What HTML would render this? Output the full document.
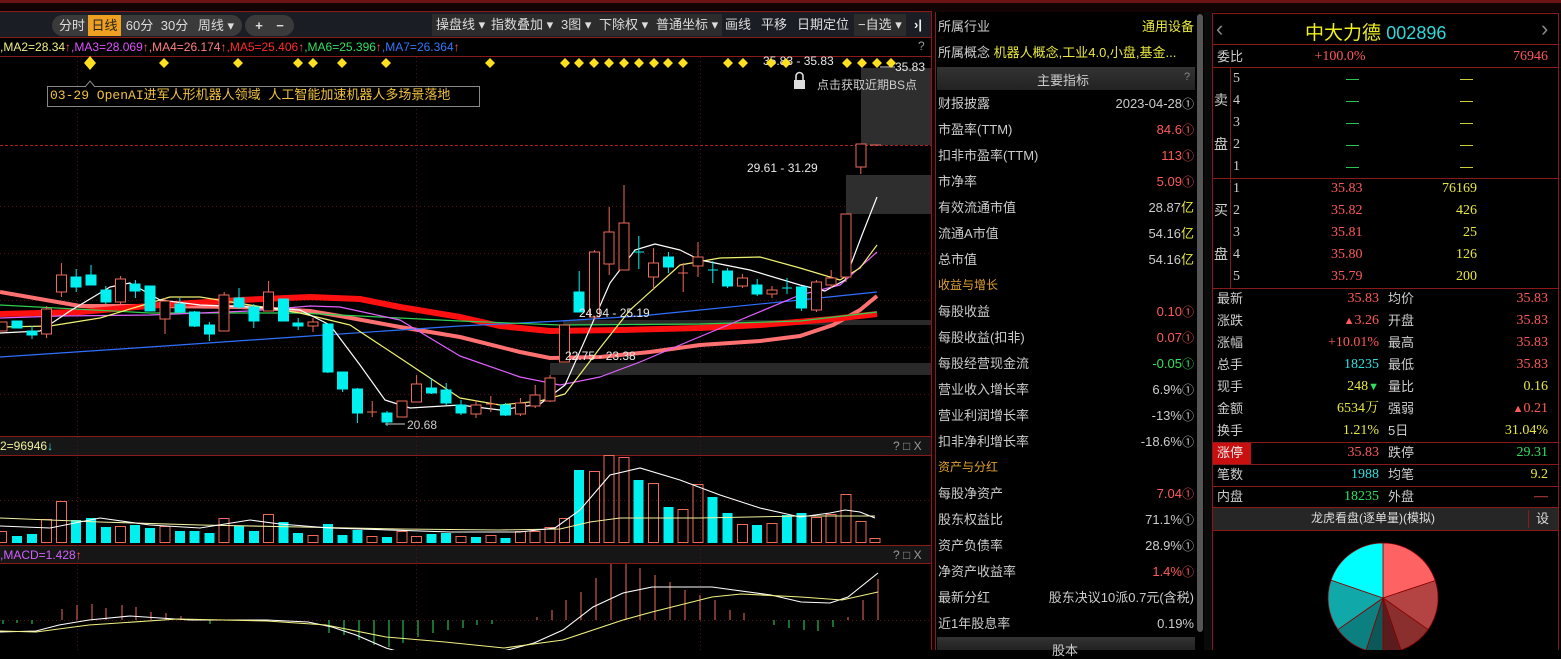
<!DOCTYPE html>
<html><head><meta charset="utf-8"><style>
*{margin:0;padding:0;box-sizing:border-box}
body{width:1561px;height:650px;background:#000;overflow:hidden;position:relative;font-family:"Liberation Sans","Noto Sans CJK SC",sans-serif;font-size:13px;color:#ccc}
.a{position:absolute;white-space:nowrap}
.btn{position:absolute;top:15px;height:21px;line-height:21px;color:#ddd;font-size:13px;text-align:center}
.grp{position:absolute;top:15px;height:21px;background:#3a3a3a;border-radius:11px}
.tb{position:absolute;top:14px;height:22px;line-height:22px;background:#2c2c2c;color:#ddd;font-size:13px;padding:0 4px}
.ml{position:absolute;left:938px;font-size:13px;color:#ccc;height:20px;line-height:20px}
.mv{position:absolute;right:367px;font-size:13px;height:20px;line-height:20px;text-align:right}
.c{font-size:12px}
.r{color:#ff5a5a}.g{color:#30e060}.y{color:#e8e840}.cy{color:#30e0e0}.w{color:#ccc}
.sl{position:absolute;left:1217px;font-size:13px;color:#ccc;height:22px;line-height:22px}
.sv{position:absolute;font-family:"Liberation Serif","Noto Serif CJK SC",serif;font-size:14px;height:22px;line-height:22px;text-align:right}
</style></head><body>
<!-- top strip -->
<div class="a" style="left:0;top:0;width:1561px;height:3px;background:#6a1414"></div>
<div class="a" style="left:0;top:3px;width:1561px;height:9px;background:#120404"></div>
<div class="a" style="left:0;top:11px;width:932px;height:1px;background:#8a1a1a"></div>
<div class="a" style="left:0;top:12px;width:932px;height:25px;background:#1b1d24"></div>
<div class="grp" style="left:52px;width:190px"></div>
<div class="a" style="left:88px;top:15px;width:33px;height:21px;background:#f0a020"></div>
<div class="btn" style="left:56px;width:32px">分时</div>
<div class="btn" style="left:88px;width:33px;color:#222">日线</div>
<div class="btn" style="left:123px;width:33px">60分</div>
<div class="btn" style="left:158px;width:33px">30分</div>
<div class="btn" style="left:193px;width:46px">周线 ▾</div>
<div class="grp" style="left:245px;width:49px"></div>
<div class="btn" style="left:249px;width:20px;font-weight:bold">+</div>
<div class="btn" style="left:270px;width:20px;font-weight:bold">−</div>
<div class="tb" style="left:432px">操盘线 ▾</div>
<div class="tb" style="left:487px">指数叠加 ▾</div>
<div class="tb" style="left:557px">3图 ▾</div>
<div class="tb" style="left:595px">下除权 ▾</div>
<div class="tb" style="left:652px">普通坐标 ▾</div>
<div class="a" style="left:725px;top:14px;line-height:22px;color:#ddd">画线</div>
<div class="a" style="left:761px;top:14px;line-height:22px;color:#ddd">平移</div>
<div class="a" style="left:797px;top:14px;line-height:22px;color:#ddd">日期定位</div>
<div class="tb" style="left:854px">−自选 ▾</div>
<div class="a" style="left:914px;top:14px;line-height:22px;color:#eee;font-weight:bold">›|</div>
<!-- MA header -->
<div class="a" style="left:0;top:37px;width:932px;height:1px;background:#8a1a1a"></div>
<div class="a" style="left:0;top:39px;font-size:12px;line-height:16px;font-family:'Liberation Sans',sans-serif"><span style="color:#f0f080">,MA2=28.34</span><span class="r">↑</span><span style="color:#e050ff">,MA3=28.069</span><span class="r">↑</span><span style="color:#ff8080">,MA4=26.174</span><span class="r">↑</span><span style="color:#ff2a2a">,MA5=25.406</span><span class="r">↑</span><span style="color:#30e060">,MA6=25.396</span><span class="r">↑</span><span style="color:#3078ff">,MA7=26.364</span><span class="r">↑</span></div>
<div class="a" style="left:918px;top:39px;font-size:12px;color:#999">?</div>

<svg class="a" style="left:0;top:0" width="932" height="650" xmlns="http://www.w3.org/2000/svg">
<g stroke="#8a1a1a" stroke-width="1">
<line x1="0" y1="56.5" x2="931" y2="56.5"/>
<line x1="0" y1="436.5" x2="931" y2="436.5"/>
<line x1="0" y1="455.5" x2="931" y2="455.5"/>
<line x1="0" y1="545.5" x2="931" y2="545.5"/>
<line x1="0" y1="563.5" x2="931" y2="563.5"/>
<line x1="931.5" y1="11" x2="931.5" y2="650"/>
</g>
<rect x="0" y="437" width="931" height="18" fill="#161616"/>
<rect x="0" y="546" width="931" height="17" fill="#161616"/>
<!-- grid -->
<g stroke="#5a1010" stroke-width="1" stroke-dasharray="1,3">
<line x1="0" y1="206.5" x2="931" y2="206.5"/><line x1="0" y1="253.5" x2="931" y2="253.5"/>
<line x1="0" y1="300.5" x2="931" y2="300.5"/><line x1="0" y1="347.5" x2="931" y2="347.5"/>
<line x1="0" y1="394.5" x2="931" y2="394.5"/>
<line x1="0" y1="500.5" x2="931" y2="500.5"/><line x1="0" y1="620.5" x2="931" y2="620.5"/>
<line x1="77.5" y1="57" x2="77.5" y2="650"/><line x1="416.5" y1="57" x2="416.5" y2="650"/><line x1="700.5" y1="57" x2="700.5" y2="650"/>
</g>
<line x1="0" y1="145.5" x2="931" y2="145.5" stroke="#b02020" stroke-dasharray="3,2"/>
<!-- gray zones -->
<rect x="861" y="68" width="70" height="77" fill="#2e2e2e"/>
<rect x="846" y="175" width="85" height="39" fill="#2e2e2e"/>
<rect x="563" y="320" width="368" height="5" fill="#2a2a2a"/>
<rect x="550" y="363" width="381" height="12" fill="#2a2a2a"/>
<!-- MA lines -->
<g fill="none" stroke-linejoin="round">
<polyline stroke="#ff7070" stroke-width="4" points="0,292 80,306 150,306 240,307 310,311 340,316 400,327 460,337 520,352 550,358 600,357 650,352 700,345 760,341 800,336 833,325 860,310 877,296"/>
<polyline stroke="#ff1010" stroke-width="6" points="0,314 80,312 160,305 240,300 310,297 360,299 400,307 460,317 500,326 550,331 620,330 700,328 760,325 833,319 877,314"/>
<polyline stroke="#3070ff" stroke-width="1.2" points="0,357 150,347 310,336 400,330 460,326 560,321 640,316 700,310 800,300 877,292"/>
<polyline stroke="#30d050" stroke-width="1.2" points="0,305 150,313 300,313 400,318 460,321 560,325 700,324 800,321 877,312"/>
<polyline stroke="#e060ff" stroke-width="1.2" points="0,318 60,316 150,315 250,311 310,306 340,307 400,320 460,356 520,377 560,385 600,377 640,362 680,345 740,320 800,295 840,285 877,252"/>
<polyline stroke="#f0f070" stroke-width="1.2" points="0,327 50,326 100,318 140,306 170,297 200,297 250,305 300,313 350,325 400,358 460,398 500,405 540,401 565,394 600,348 630,310 680,265 720,258 760,257 800,268 840,280 860,268 877,245"/>
<polyline stroke="#ffffff" stroke-width="1.2" points="0,333 40,331 70,311 110,287 130,283 160,300 200,305 250,307 300,310 330,325 360,365 385,400 410,408 460,405 500,410 540,404 565,385 585,340 610,283 635,250 655,244 680,250 700,260 750,270 800,285 825,291 845,280 862,235 877,197"/>
</g>
<!-- candles: red hollow -->
<g fill="#000" stroke="#f06a5a" stroke-width="1">
<rect x="-2" y="322" width="9" height="9"/>
<line x1="46.6" y1="306" x2="46.6" y2="338"/><rect x="41.5" y="309" width="10" height="25"/>
<line x1="61.4" y1="263" x2="61.4" y2="297"/><rect x="56.5" y="275" width="10" height="17"/>
<line x1="120.6" y1="276" x2="120.6" y2="304"/><rect x="115.5" y="279" width="10" height="23"/>
<line x1="165" y1="298" x2="165" y2="334"/><rect x="160" y="301" width="10" height="18"/>
<line x1="224.2" y1="292" x2="224.2" y2="331"/><rect x="219" y="295" width="10" height="36"/>
<line x1="268.6" y1="281" x2="268.6" y2="311"/><rect x="263.5" y="292" width="10" height="19"/>
<line x1="313" y1="318" x2="313" y2="332"/><rect x="308" y="322" width="10" height="4"/>
<line x1="372.2" y1="401" x2="372.2" y2="417"/><line x1="367" y1="412" x2="377" y2="412"/>
<rect x="397" y="401" width="10" height="16"/>
<line x1="416.6" y1="375" x2="416.6" y2="402"/><rect x="411.5" y="384" width="10" height="18"/>
<line x1="476" y1="400" x2="476" y2="418"/><rect x="471" y="405" width="10" height="9"/>
<line x1="490.8" y1="396" x2="490.8" y2="412"/><line x1="486" y1="404" x2="496" y2="404"/>
<line x1="520.4" y1="398" x2="520.4" y2="416"/><rect x="515.5" y="403" width="10" height="11"/>
<line x1="535.2" y1="385" x2="535.2" y2="408"/><rect x="530" y="395" width="10" height="11"/>
<line x1="550" y1="375" x2="550" y2="402"/><rect x="545" y="378" width="10" height="23"/>
<rect x="559.5" y="325" width="10" height="37"/>
<line x1="594.4" y1="250" x2="594.4" y2="320"/><rect x="589.5" y="252" width="10" height="65"/>
<line x1="609.2" y1="207" x2="609.2" y2="275"/><rect x="604" y="232" width="10" height="32"/>
<line x1="624" y1="185" x2="624" y2="270"/><rect x="619" y="223" width="10" height="47"/>
<line x1="653.6" y1="248" x2="653.6" y2="290"/><rect x="648.5" y="263" width="10" height="14"/>
<line x1="683.2" y1="263" x2="683.2" y2="292"/><line x1="678" y1="273" x2="688" y2="273"/>
<line x1="698" y1="242" x2="698" y2="277"/><rect x="693" y="257" width="10" height="9"/>
<line x1="742.4" y1="274" x2="742.4" y2="288"/><rect x="737.5" y="278" width="10" height="8"/>
<line x1="772" y1="286" x2="772" y2="298"/><rect x="767" y="290" width="10" height="4"/>
<line x1="816.4" y1="280" x2="816.4" y2="312"/><rect x="811.5" y="282" width="10" height="28"/>
<line x1="831.2" y1="270" x2="831.2" y2="288"/><rect x="826" y="278" width="10" height="7"/>
<line x1="846" y1="214" x2="846" y2="282"/><rect x="841" y="214" width="10" height="63"/>
<line x1="860.8" y1="167" x2="860.8" y2="174"/><rect x="856" y="144" width="10" height="23"/>
<line x1="870" y1="145" x2="881" y2="145"/>
</g>
<!-- candles: cyan -->
<g fill="#00f0f0" stroke="#00f0f0" stroke-width="1">
<rect x="12" y="321" width="10" height="7"/>
<line x1="32" y1="326" x2="32" y2="339"/><rect x="27" y="331" width="10" height="4"/>
<line x1="76.2" y1="269" x2="76.2" y2="292"/><rect x="71" y="277" width="10" height="10"/>
<line x1="91" y1="265" x2="91" y2="285"/><rect x="86" y="275" width="10" height="10"/>
<line x1="105.8" y1="286" x2="105.8" y2="304"/><rect x="101" y="290" width="10" height="12"/>
<line x1="135.4" y1="280" x2="135.4" y2="298"/><rect x="130" y="284" width="10" height="7"/>
<rect x="145" y="286" width="10" height="25"/>
<line x1="179.8" y1="298" x2="179.8" y2="313"/><rect x="175" y="304" width="10" height="8"/>
<line x1="194.6" y1="311" x2="194.6" y2="327"/><rect x="189.5" y="312" width="10" height="14"/>
<line x1="209.4" y1="322" x2="209.4" y2="341"/><rect x="204.5" y="325" width="10" height="9"/>
<line x1="239" y1="288" x2="239" y2="309"/><rect x="234" y="298" width="10" height="9"/>
<line x1="253.8" y1="304" x2="253.8" y2="328"/><rect x="249" y="307" width="10" height="14"/>
<rect x="278.5" y="299" width="10" height="22"/>
<line x1="298.2" y1="318" x2="298.2" y2="330"/><rect x="293" y="323" width="10" height="3"/>
<line x1="327.8" y1="324" x2="327.8" y2="373"/><rect x="323" y="324" width="10" height="48"/>
<line x1="342.6" y1="372" x2="342.6" y2="392"/><rect x="337.5" y="372" width="10" height="17"/>
<line x1="357.4" y1="388" x2="357.4" y2="423"/><rect x="352.5" y="389" width="10" height="24"/>
<line x1="387" y1="411" x2="387" y2="426"/><rect x="382" y="413" width="10" height="9"/>
<line x1="431.4" y1="378" x2="431.4" y2="394"/><rect x="426.5" y="388" width="10" height="5"/>
<line x1="446.2" y1="383" x2="446.2" y2="405"/><rect x="441" y="390" width="10" height="13"/>
<line x1="461" y1="400" x2="461" y2="415"/><rect x="456" y="405" width="10" height="8"/>
<line x1="505.6" y1="403" x2="505.6" y2="416"/><rect x="500.5" y="405" width="10" height="10"/>
<line x1="579.2" y1="271" x2="579.2" y2="312"/><rect x="574" y="292" width="10" height="20"/>
<line x1="638.8" y1="236" x2="638.8" y2="269"/><line x1="633.5" y1="252" x2="644" y2="252"/>
<line x1="668.4" y1="252" x2="668.4" y2="273"/><rect x="663.5" y="257" width="10" height="10"/>
<line x1="712.8" y1="261" x2="712.8" y2="283"/><line x1="708" y1="270" x2="718" y2="270"/>
<line x1="727.6" y1="268" x2="727.6" y2="288"/><rect x="722.5" y="271" width="10" height="15"/>
<line x1="757.2" y1="279" x2="757.2" y2="296"/><rect x="752" y="285" width="10" height="9"/>
<line x1="787" y1="278" x2="787" y2="294"/><line x1="782" y1="288" x2="792" y2="288"/>
<line x1="801.6" y1="286" x2="801.6" y2="311"/><rect x="796.5" y="287" width="10" height="21"/>
</g>
<!-- labels in chart -->
<g font-family="Liberation Sans,sans-serif" font-size="12" fill="#e8e8e8">
<text x="747" y="172">29.61 - 31.29</text>
<text x="579" y="317">24.94 - 25.19</text>
<text x="565" y="360">22.75 - 23.38</text>
<text x="407" y="429" fill="#ccc">20.68</text>
<text x="763" y="65">35.83 - 35.83</text>
<text x="895" y="71">35.83</text>
</g>
<line x1="385" y1="424" x2="405" y2="424" stroke="#ccc"/>
<line x1="880" y1="67" x2="895" y2="67" stroke="#ccc"/>
<!-- diamonds -->
<g fill="#ffe020">
<path d="M90 56 L96 63 L90 70 L84 63Z"/>
<path d="M164 58 L169 63 L164 68 L159 63Z"/><path d="M238 58 L243 63 L238 68 L233 63Z"/>
<path d="M298 58 L303 63 L298 68 L293 63Z"/><path d="M313 58 L318 63 L313 68 L308 63Z"/>
<path d="M342 58 L347 63 L342 68 L337 63Z"/><path d="M386 58 L391 63 L386 68 L381 63Z"/>
<path d="M490 58 L495 63 L490 68 L485 63Z"/><path d="M565 58 L570 63 L565 68 L560 63Z"/>
<path d="M579 58 L584 63 L579 68 L574 63Z"/><path d="M594 58 L599 63 L594 68 L589 63Z"/>
<path d="M609 58 L614 63 L609 68 L604 63Z"/><path d="M624 58 L629 63 L624 68 L619 63Z"/>
<path d="M639 58 L644 63 L639 68 L634 63Z"/><path d="M654 58 L659 63 L654 68 L649 63Z"/>
<path d="M668 58 L673 63 L668 68 L663 63Z"/><path d="M683 58 L688 63 L683 68 L678 63Z"/>
<path d="M728 58 L733 63 L728 68 L723 63Z"/><path d="M743 58 L748 63 L743 68 L738 63Z"/>
<path d="M771 58 L776 63 L771 68 L766 63Z"/><path d="M786 58 L791 63 L786 68 L781 63Z"/>
<path d="M847 58 L852 63 L847 68 L842 63Z"/><path d="M862 58 L867 63 L862 68 L857 63Z"/>
<path d="M877 58 L882 63 L877 68 L872 63Z"/><path d="M891 58 L896 63 L891 68 L886 63Z"/>
</g>
<!-- lock -->
<rect x="794" y="80" width="11" height="9" fill="#ddd"/>
<path d="M796 80 V76 a3.5 3.5 0 0 1 7 0 V80" fill="none" stroke="#ddd" stroke-width="1.6"/>
<!-- tooltip -->
<rect x="47.5" y="86.5" width="432" height="20" fill="#000" stroke="#888"/>
<path d="M85 87 L90 81 L95 87" fill="#000" stroke="#888"/>
<!-- volume bars -->
<g fill="#00f0f0">
<rect x="12" y="536" width="10" height="7"/><rect x="27" y="534" width="10" height="9"/>
<rect x="71" y="520" width="10" height="23"/><rect x="86" y="518" width="10" height="25"/>
<rect x="101" y="527" width="10" height="16"/><rect x="130" y="525" width="10" height="18"/>
<rect x="145" y="528" width="10" height="15"/><rect x="175" y="531" width="10" height="12"/>
<rect x="189.5" y="531" width="10" height="12"/><rect x="204.5" y="533" width="10" height="10"/>
<rect x="234" y="526" width="10" height="17"/><rect x="249" y="531" width="10" height="12"/>
<rect x="278.5" y="522" width="10" height="21"/><rect x="293" y="533" width="10" height="10"/>
<rect x="323" y="524" width="10" height="19"/><rect x="337.5" y="535" width="10" height="8"/>
<rect x="352.5" y="530" width="10" height="13"/><rect x="382" y="537" width="10" height="6"/>
<rect x="426.5" y="534" width="10" height="9"/><rect x="441" y="533" width="10" height="10"/>
<rect x="471" y="537" width="10" height="6"/><rect x="500.5" y="538" width="10" height="5"/>
<rect x="574" y="470" width="10" height="73"/><rect x="633.5" y="480" width="10" height="63"/>
<rect x="663.5" y="507" width="10" height="36"/><rect x="707.5" y="497" width="10" height="46"/>
<rect x="722.5" y="513" width="10" height="30"/><rect x="752" y="525" width="10" height="18"/>
<rect x="782" y="515" width="10" height="28"/><rect x="796.5" y="513" width="10" height="30"/>
</g>
<g fill="none" stroke="#f06a5a">
<rect x="-2.5" y="531.5" width="9" height="11"/>
<rect x="41.5" y="519.5" width="10" height="23"/><rect x="56.5" y="501.5" width="10" height="41"/>
<rect x="115.5" y="526.5" width="10" height="16"/><rect x="160" y="526.5" width="10" height="16"/>
<rect x="219" y="518.5" width="10" height="24"/><rect x="263.5" y="514.5" width="10" height="28"/>
<rect x="308" y="535.5" width="10" height="7"/><rect x="367" y="536.5" width="10" height="6"/>
<rect x="397" y="531.5" width="10" height="11"/><rect x="411.5" y="536.5" width="10" height="6"/>
<rect x="456" y="536.5" width="10" height="6"/><rect x="486" y="535.5" width="10" height="7"/>
<rect x="515.5" y="531.5" width="10" height="11"/><rect x="530" y="531.5" width="10" height="11"/>
<rect x="545" y="527.5" width="10" height="15"/><rect x="559.5" y="518.5" width="10" height="24"/>
<rect x="589.5" y="471.5" width="10" height="71"/><rect x="604" y="455.5" width="10" height="87"/>
<rect x="619" y="457.5" width="10" height="85"/><rect x="648.5" y="483.5" width="10" height="59"/>
<rect x="678" y="509.5" width="10" height="33"/><rect x="693" y="484.5" width="10" height="58"/>
<rect x="737.5" y="524.5" width="10" height="18"/><rect x="767" y="523.5" width="10" height="19"/>
<rect x="811.5" y="517.5" width="10" height="25"/><rect x="826" y="514.5" width="10" height="28"/>
<rect x="841" y="494.5" width="10" height="48"/><rect x="856" y="521.5" width="10" height="21"/>
<rect x="870" y="538.5" width="10" height="4"/>
</g>
<g fill="none" stroke-width="1.1">
<polyline stroke="#f0f0a0" points="0,518 100,522 200,525 300,527 400,529 500,530 560,529 590,522 620,518 700,518 800,516 875,516"/>
<polyline stroke="#fff" points="0,526 50,528 100,518 150,525 200,528 250,520 280,524 330,528 450,532 520,532 555,528 580,510 610,475 640,468 680,480 720,495 760,508 800,517 830,513 845,510 860,512 875,518"/>
</g>
<!-- MACD -->
<g stroke="#f06a5a" stroke-width="1">
<line x1="62" y1="609" x2="62" y2="620"/><line x1="77" y1="605" x2="77" y2="620"/><line x1="92" y1="604" x2="92" y2="620"/>
<line x1="106" y1="608" x2="106" y2="620"/><line x1="122" y1="605" x2="122" y2="620"/><line x1="136" y1="607" x2="136" y2="620"/>
<line x1="151" y1="612" x2="151" y2="620"/><line x1="166" y1="613" x2="166" y2="620"/><line x1="181" y1="616" x2="181" y2="620"/>
<line x1="537" y1="617" x2="537" y2="620"/><line x1="552" y1="610" x2="552" y2="620"/><line x1="566" y1="600" x2="566" y2="620"/>
<line x1="581" y1="592" x2="581" y2="620"/><line x1="596" y1="578" x2="596" y2="620"/><line x1="611" y1="564" x2="611" y2="620"/>
<line x1="626" y1="564" x2="626" y2="620"/><line x1="640" y1="568" x2="640" y2="620"/><line x1="655" y1="575" x2="655" y2="620"/>
<line x1="670" y1="582" x2="670" y2="620"/><line x1="685" y1="590" x2="685" y2="620"/><line x1="700" y1="595" x2="700" y2="620"/>
<line x1="715" y1="600" x2="715" y2="620"/><line x1="730" y1="610" x2="730" y2="620"/><line x1="744" y1="613" x2="744" y2="620"/>
<line x1="848" y1="617" x2="848" y2="620"/><line x1="863" y1="600" x2="863" y2="620"/><line x1="878" y1="579" x2="878" y2="620"/>
</g>
<g stroke="#30e060" stroke-width="1">
<line x1="3" y1="620" x2="3" y2="624"/><line x1="17" y1="620" x2="17" y2="623"/><line x1="32" y1="620" x2="32" y2="624"/>
<line x1="210" y1="620" x2="210" y2="624"/><line x1="329" y1="620" x2="329" y2="633"/><line x1="344" y1="620" x2="344" y2="635"/>
<line x1="359" y1="620" x2="359" y2="640"/><line x1="374" y1="620" x2="374" y2="645"/><line x1="389" y1="620" x2="389" y2="647"/>
<line x1="403" y1="620" x2="403" y2="643"/><line x1="418" y1="620" x2="418" y2="637"/><line x1="433" y1="620" x2="433" y2="633"/>
<line x1="448" y1="620" x2="448" y2="630"/><line x1="463" y1="620" x2="463" y2="628"/><line x1="477" y1="620" x2="477" y2="625"/>
<line x1="492" y1="620" x2="492" y2="624"/><line x1="774" y1="620" x2="774" y2="625"/><line x1="789" y1="620" x2="789" y2="628"/>
<line x1="804" y1="620" x2="804" y2="630"/><line x1="818" y1="620" x2="818" y2="631"/><line x1="833" y1="620" x2="833" y2="627"/>
</g>
<g fill="none" stroke-width="1.1">
<polyline stroke="#fff" points="0,632 36,631 59,625 89,620 130,616 160,618 190,620 267,620 308,622 332,627 356,635 386,648 400,652 500,652 534,643 563,630 593,607 623,593 652,587 712,587 771,595 801,602 830,603 848,597 878,573"/>
<polyline stroke="#f0f080" points="0,631 36,632 89,625 178,619 267,621 326,625 386,637 445,642 504,648 563,640 623,620 652,612 712,597 741,594 801,597 842,600 878,592"/>
</g>
<g font-family="Liberation Sans,sans-serif" font-size="12" fill="#999"><text x="893" y="450">? □ X</text><text x="893" y="559">? □ X</text></g>
</svg>
<div class="a" style="left:50px;top:88px;font-family:'Liberation Mono','Noto Sans CJK SC',monospace;font-size:13px;color:#f0c040;line-height:16px">03-29 OpenAI进军人形机器人领域 人工智能加速机器人多场景落地</div>
<div class="a" style="left:817px;top:76px;font-size:12px;color:#ccc">点击获取近期BS点</div>
<div class="a" style="left:0;top:438px;font-size:12px;color:#f0f0a0;line-height:16px">2=96946<span class="cy">↓</span></div>
<div class="a" style="left:0;top:547px;font-size:12px;line-height:16px"><span style="color:#d060ff">,MACD=1.428</span><span class="r">↑</span></div>

<!-- middle panel -->
<div class="a" style="left:932px;top:12px;width:2px;height:638px;background:#120404"></div>
<div class="a" style="left:935px;top:12px;width:1px;height:638px;background:#8a1a1a"></div>
<div class="a" style="left:1197px;top:14px;width:6px;height:618px;background:#555;border-radius:3px"></div>
<div class="ml" style="top:17px">所属行业</div><div class="mv y" style="top:17px">通用设备</div>
<div class="ml" style="top:43px">所属概念 <span class="y">机器人概念,工业4.0,小盘,基金...</span></div>
<div class="a" style="left:937px;top:67px;width:258px;height:23px;background:linear-gradient(#333,#222)"></div>
<div class="a" style="left:1037px;top:70px;color:#ccc">主要指标</div><div class="a" style="left:1184px;top:71px;font-size:11px;color:#888">?</div>
<div class="ml" style="top:94px">财报披露</div><div class="mv w" style="top:94px">2023-04-28<span class="c">①</span></div>
<div class="ml" style="top:120px">市盈率(TTM)</div><div class="mv r" style="top:120px">84.6<span class="c">①</span></div>
<div class="ml" style="top:146px">扣非市盈率(TTM)</div><div class="mv r" style="top:146px">113<span class="c">①</span></div>
<div class="ml" style="top:172px">市净率</div><div class="mv r" style="top:172px">5.09<span class="c">①</span></div>
<div class="ml" style="top:198px">有效流通市值</div><div class="mv w" style="top:198px">28.87<span class="y">亿</span></div>
<div class="ml" style="top:224px">流通A市值</div><div class="mv w" style="top:224px">54.16<span class="y">亿</span></div>
<div class="ml" style="top:250px">总市值</div><div class="mv w" style="top:250px">54.16<span class="y">亿</span></div>
<div class="ml" style="top:275px;font-size:12px;color:#e0a030">收益与增长</div>
<div class="ml" style="top:302px">每股收益</div><div class="mv r" style="top:302px">0.10<span class="c">①</span></div>
<div class="ml" style="top:328px">每股收益(扣非)</div><div class="mv r" style="top:328px">0.07<span class="c">①</span></div>
<div class="ml" style="top:354px">每股经营现金流</div><div class="mv g" style="top:354px">-0.05<span class="c">①</span></div>
<div class="ml" style="top:380px">营业收入增长率</div><div class="mv w" style="top:380px">6.9%<span class="c">①</span></div>
<div class="ml" style="top:406px">营业利润增长率</div><div class="mv w" style="top:406px">-13%<span class="c">①</span></div>
<div class="ml" style="top:432px">扣非净利增长率</div><div class="mv w" style="top:432px">-18.6%<span class="c">①</span></div>
<div class="ml" style="top:457px;font-size:12px;color:#e0a030">资产与分红</div>
<div class="ml" style="top:484px">每股净资产</div><div class="mv r" style="top:484px">7.04<span class="c">①</span></div>
<div class="ml" style="top:510px">股东权益比</div><div class="mv w" style="top:510px">71.1%<span class="c">①</span></div>
<div class="ml" style="top:536px">资产负债率</div><div class="mv w" style="top:536px">28.9%<span class="c">①</span></div>
<div class="ml" style="top:562px">净资产收益率</div><div class="mv r" style="top:562px">1.4%<span class="c">①</span></div>
<div class="ml" style="top:588px">最新分红</div><div class="mv w" style="top:588px">股东决议10派0.7元(含税)</div>
<div class="ml" style="top:614px">近1年股息率</div><div class="mv w" style="top:614px">0.19%</div>
<div class="a" style="left:937px;top:637px;width:258px;height:13px;background:linear-gradient(#333,#222)"></div>
<div class="a" style="left:1052px;top:640px;color:#ccc">股本</div>

<!-- right panel -->
<div class="a" style="left:1204px;top:12px;width:8px;height:638px;background:#0a0a0a"></div>
<svg class="a" style="left:1204px;top:0" width="357" height="650" xmlns="http://www.w3.org/2000/svg">
<g stroke="#8a1a1a" fill="none">
<rect x="8.5" y="13.5" width="346" height="640"/>
<line x1="8" y1="44.5" x2="355" y2="44.5"/><line x1="8" y1="67.5" x2="355" y2="67.5"/>
<line x1="8" y1="178.5" x2="355" y2="178.5"/><line x1="8" y1="288.5" x2="355" y2="288.5"/>
<line x1="26.5" y1="68" x2="26.5" y2="288"/>
<line x1="8" y1="442.5" x2="355" y2="442.5"/><line x1="8" y1="464.5" x2="355" y2="464.5"/>
<line x1="8" y1="486.5" x2="355" y2="486.5"/><line x1="8" y1="507.5" x2="355" y2="507.5"/>
<line x1="8" y1="530.5" x2="355" y2="530.5"/>
</g>
<rect x="9" y="508" width="345" height="22" fill="#262626"/>
<line x1="324.5" y1="510" x2="324.5" y2="528" stroke="#8a1a1a"/>
<rect x="9" y="443" width="38" height="21" fill="#c81010"/>
<g stroke="#800" stroke-width="0.8">
<path d="M179 598 L179 543 A55 55 0 0 1 231.2 580.6Z" fill="#ff6262"/>
<path d="M179 598 L231.2 580.6 A55 55 0 0 1 224.1 629.6Z" fill="#b44444"/>
<path d="M179 598 L224.1 629.6 A55 55 0 0 1 196.9 650Z" fill="#8a2e2e"/>
<path d="M179 598 L196.9 650 A55 55 0 0 1 179 653Z" fill="#5a1c1c"/>
<path d="M179 598 L179 653 A55 55 0 0 1 162 650.3Z" fill="#0c5858"/>
<path d="M179 598 L162 650.3 A55 55 0 0 1 133.9 629.6Z" fill="#0c8080"/>
<path d="M179 598 L133.9 629.6 A55 55 0 0 1 127 580.1Z" fill="#10a8a8"/>
<path d="M179 598 L127 580.1 A55 55 0 0 1 179 543Z" fill="#00ffff"/>
</g>
</svg>
<div class="a" style="left:1216px;top:16px;font-size:22px;color:#888">‹</div>
<div class="a" style="left:1541px;top:16px;font-size:22px;color:#888">›</div>
<div class="a" style="left:1305px;top:18px;font-size:19px;color:#f0f020">中大力德 <span style="color:#30d8d8;font-family:'Liberation Sans',sans-serif;font-size:18px">002896</span></div>
<div class="sl" style="top:46px">委比</div>
<div class="sv r" style="top:46px;left:1300px;width:80px;text-align:center">+100.0%</div>
<div class="sv r" style="top:46px;right:13px">76946</div>
<div class="a" style="left:1214px;top:90px;font-size:14px">卖</div>
<div class="a" style="left:1214px;top:134px;font-size:14px">盘</div>
<div class="a" style="left:1214px;top:200px;font-size:14px">买</div>
<div class="a" style="left:1214px;top:244px;font-size:14px">盘</div>
<div class="sv w" style="top:68px;left:1233px">5</div><div class="sv w" style="top:90px;left:1233px">4</div><div class="sv w" style="top:112px;left:1233px">3</div><div class="sv w" style="top:134px;left:1233px">2</div><div class="sv w" style="top:156px;left:1233px">1</div>
<div class="a g" style="left:1346px;top:68px;line-height:22px">—<br>—<br>—<br>—<br>—</div>
<div class="a y" style="left:1460px;top:68px;line-height:22px">—<br>—<br>—<br>—<br>—</div>
<div class="sv w" style="top:178px;left:1233px">1</div><div class="sv w" style="top:200px;left:1233px">2</div><div class="sv w" style="top:222px;left:1233px">3</div><div class="sv w" style="top:244px;left:1233px">4</div><div class="sv w" style="top:266px;left:1233px">5</div>
<div class="sv r" style="top:178px;left:1331px">35.83</div><div class="sv r" style="top:200px;left:1331px">35.82</div><div class="sv r" style="top:222px;left:1331px">35.81</div><div class="sv r" style="top:244px;left:1331px">35.80</div><div class="sv r" style="top:266px;left:1331px">35.79</div>
<div class="sv y" style="top:178px;right:84px">76169</div><div class="sv y" style="top:200px;right:84px">426</div><div class="sv y" style="top:222px;right:84px">25</div><div class="sv y" style="top:244px;right:84px">126</div><div class="sv y" style="top:266px;right:84px">200</div>

<div class="sl" style="top:288px">最新</div><div class="sv r" style="top:288px;right:182px">35.83</div><div class="sl" style="top:288px;left:1388px">均价</div><div class="sv r" style="top:288px;right:13px">35.83</div>
<div class="sl" style="top:310px">涨跌</div><div class="sv r" style="top:310px;right:182px"><span style="font-size:11px">▲</span>3.26</div><div class="sl" style="top:310px;left:1388px">开盘</div><div class="sv r" style="top:310px;right:13px">35.83</div>
<div class="sl" style="top:332px">涨幅</div><div class="sv r" style="top:332px;right:182px">+10.01%</div><div class="sl" style="top:332px;left:1388px">最高</div><div class="sv r" style="top:332px;right:13px">35.83</div>
<div class="sl" style="top:354px">总手</div><div class="sv cy" style="top:354px;right:182px">18235</div><div class="sl" style="top:354px;left:1388px">最低</div><div class="sv r" style="top:354px;right:13px">35.83</div>
<div class="sl" style="top:376px">现手</div><div class="sv y" style="top:376px;right:182px">248<span class="g" style="font-size:11px">▼</span></div><div class="sl" style="top:376px;left:1388px">量比</div><div class="sv y" style="top:376px;right:13px">0.16</div>
<div class="sl" style="top:398px">金额</div><div class="sv y" style="top:398px;right:182px">6534万</div><div class="sl" style="top:398px;left:1388px">强弱</div><div class="sv r" style="top:398px;right:13px"><span style="font-size:11px">▲</span>0.21</div>
<div class="sl" style="top:420px">换手</div><div class="sv y" style="top:420px;right:182px">1.21%</div><div class="sl" style="top:420px;left:1388px">5日</div><div class="sv y" style="top:420px;right:13px">31.04%</div>
<div class="sl" style="top:442px;color:#eee">涨停</div><div class="sv r" style="top:442px;right:182px">35.83</div><div class="sl" style="top:442px;left:1388px">跌停</div><div class="sv g" style="top:442px;right:13px">29.31</div>
<div class="sl" style="top:464px">笔数</div><div class="sv cy" style="top:464px;right:182px">1988</div><div class="sl" style="top:464px;left:1388px">均笔</div><div class="sv y" style="top:464px;right:13px">9.2</div>
<div class="sl" style="top:486px">内盘</div><div class="sv g" style="top:486px;right:182px">18235</div><div class="sl" style="top:486px;left:1388px">外盘</div><div class="sv r" style="top:486px;right:13px">—</div>
<div class="a" style="left:1311px;top:510px;font-size:12px;color:#ddd;line-height:17px">龙虎看盘(逐单量)(模拟)</div>
<div class="a" style="left:1536px;top:510px;font-size:13px;color:#ddd;line-height:17px">设</div>
</body></html>
